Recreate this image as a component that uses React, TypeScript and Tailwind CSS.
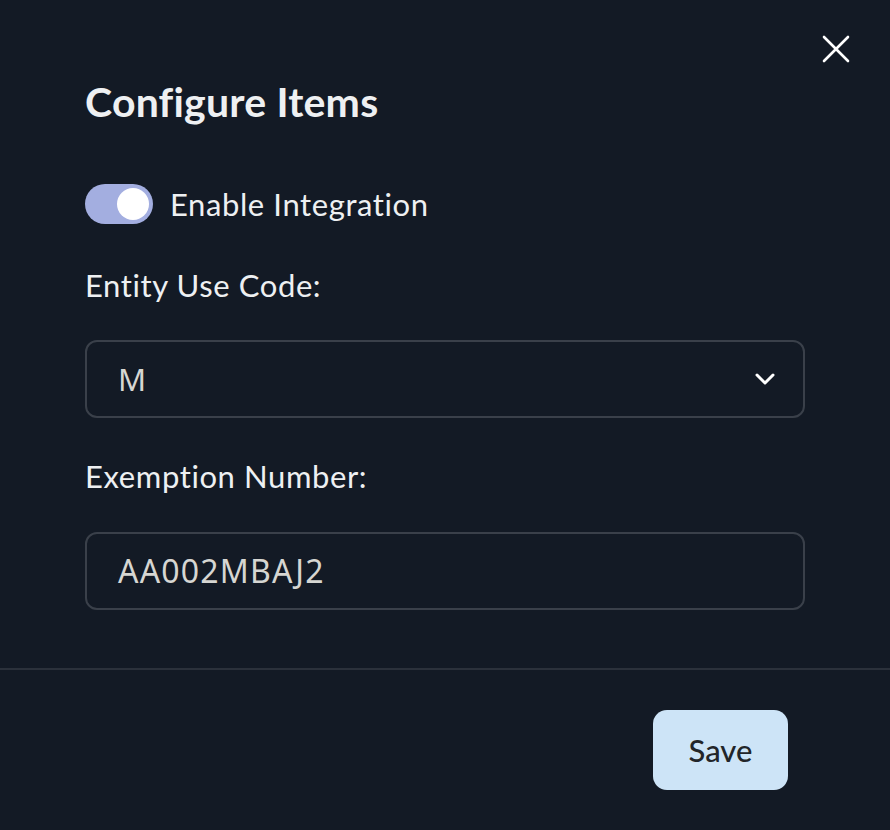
import React from "react";

export default function App() {
  return (
    <div
      className="relative w-[890px] h-[830px] bg-[#131a25] text-[#eef0f2] flex flex-col"
      style={{ fontFamily: "Lato, 'Noto Sans', sans-serif" }}
    >
      <button className="absolute top-[35px] right-[40px] w-[28px] h-[28px] flex items-center justify-center">
        <svg width="28" height="28" viewBox="0 0 28 28" fill="none">
          <path d="M2 2L26 26M26 2L2 26" stroke="#ffffff" strokeWidth="2.6" strokeLinecap="round" />
        </svg>
      </button>

      <div className="flex flex-col px-[85px] pt-[76px] flex-1">
        <h1 className="text-[41px] leading-[52px] font-bold tracking-[0.2px]">Configure Items</h1>

        <div className="flex items-center gap-[17px] mt-[56px]">
          <div className="w-[68px] h-[40px] rounded-full bg-[#a3aee0] flex items-center justify-end pr-[4px]">
            <div className="w-[32px] h-[32px] rounded-full bg-white" />
          </div>
          <span className="text-[31px] leading-[40px] tracking-[0.6px]">Enable Integration</span>
        </div>

        <label className="text-[31px] leading-[40px] tracking-[0.6px] mt-[41px]">Entity Use Code:</label>
        <div className="mt-[35px] h-[78px] rounded-[12px] border-2 border-[#3a404a] flex items-center justify-between pl-[31px] pr-[28px]">
          <span className="text-[31px] text-[#d6d6d2]" style={{ fontFamily: "'Noto Sans', sans-serif" }}>M</span>
          <svg width="20" height="14" viewBox="0 0 20 14" fill="none">
            <path d="M2 3L10 11L18 3" stroke="#ffffff" strokeWidth="3" strokeLinecap="round" strokeLinejoin="round" />
          </svg>
        </div>

        <label className="text-[31px] leading-[40px] tracking-[0.6px] mt-[38px]">Exemption Number:</label>
        <div className="mt-[36px] h-[78px] rounded-[12px] border-2 border-[#3a404a] flex items-center pl-[31px]">
          <span className="text-[32px] text-[#d6d6d2] tracking-[1.2px]" style={{ fontFamily: "'Noto Sans', sans-serif" }}>AA002MBAJ2</span>
        </div>
      </div>

      <div className="h-[2px] bg-[#2b313b]" />

      <div className="flex justify-end pr-[102px] pt-[40px] pb-[40px]">
        <button className="w-[135px] h-[80px] rounded-[14px] bg-[#cde4f7] text-[#222529] text-[31px] font-medium">Save</button>
      </div>
    </div>
  );
}
